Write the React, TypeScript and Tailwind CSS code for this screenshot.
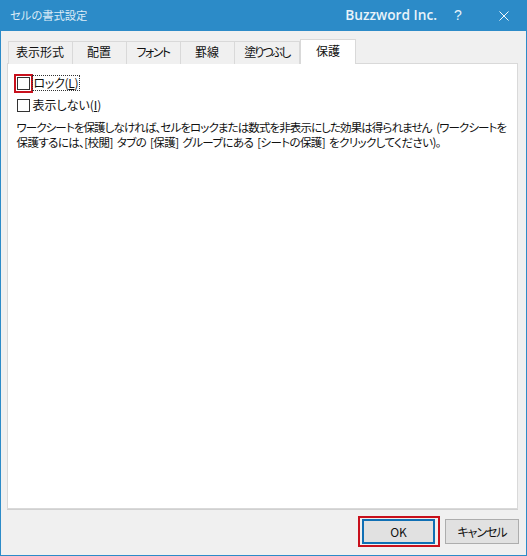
const font = { fontFamily: '"Noto Sans CJK JP", "Liberation Sans", sans-serif' };

const tabs = [
  { label: '表示形式', width: 'w-[65px]', tight: '' },
  { label: '配置', width: 'w-[54px]', tight: '' },
  { label: 'フォント', width: 'w-[54px]', tight: 'tracking-[-1.5px]' },
  { label: '罫線', width: 'w-[54px]', tight: '' },
  { label: '塗りつぶし', width: 'w-[65.5px]', tight: 'tracking-[-2px]' },
];

function Checkbox({ highlighted = false }: { highlighted?: boolean }) {
  return (
    <span
      className={`block h-[13px] w-[13px] shrink-0 border border-[#333] bg-white ${
        highlighted ? 'outline-2 outline-offset-1 outline-[#c8101c]' : ''
      }`}
    />
  );
}

export default function App() {
  return (
    <div
      className="flex h-[556px] w-[527px] flex-col overflow-hidden border border-t-0 border-[#2c8bc8] bg-[#f0f0f0] text-[12px] text-[#111] [font-feature-settings:'palt']"
      style={font}
    >
      <header className="flex h-[31px] shrink-0 items-center bg-[#2c8bc8] pl-[9px] text-white">
        <span className="text-[11.3px] text-[#dcecf7]">セルの書式設定</span>
        <span className="ml-auto text-[13.7px] font-semibold text-[#e8f3fa] [font-family:'Open_Sans',sans-serif]">
          Buzzword Inc.
        </span>
        <span className="ml-[16px] w-[10px] text-center text-[14px] text-[#e8f3fa] [font-family:'Liberation_Sans',sans-serif]">?</span>
        <svg className="ml-[36px] mr-[17px] h-[10px] w-[10px]" viewBox="0 0 10 10" fill="none" stroke="#f2f8fc" strokeWidth="1">
          <path d="M0.5 0.5 9.5 9.5M9.5 0.5 0.5 9.5" />
        </svg>
      </header>

      <div className="flex min-h-0 flex-1 flex-col pl-[5.5px] pr-[8px] pt-[8px]">
        <nav className="relative z-10 -mb-px flex h-[24.5px] items-end pl-px">
          {tabs.map((tab) => (
            <div
              key={tab.label}
              className={`flex h-[23px] items-center justify-center border border-b-0 border-l-0 border-[#d9d9d9] bg-[#f0f0f0] pb-[2px] first:border-l ${tab.width} ${tab.tight}`}
            >
              {tab.label}
            </div>
          ))}
          <div className="flex h-[25px] w-[56px] items-center justify-center border border-b-0 border-[#d9d9d9] bg-white pb-[2px]">
            保護
          </div>
        </nav>

        <main className="h-[447px] border border-[#d9d9d9] bg-white pl-[9px] pr-[8px] pt-[11px] shadow-[0_1px_0_#d0d0d0]">
          <label className="flex h-[17px] items-center gap-[2px]">
            <Checkbox highlighted />
            <span className="flex h-[16px] items-center border border-dotted border-[#333] px-[1px] leading-none tracking-[-0.3px]">
              ロック(<span className="underline">L</span>)
            </span>
          </label>
          <label className="mt-[5px] flex h-[17px] items-center gap-[3px]">
            <Checkbox />
            <span className="leading-none">
              表示しない(<span className="underline">I</span>)
            </span>
          </label>
          <p className="mt-[6px] text-[11.5px] leading-[15px] whitespace-nowrap">
            <span className="block tracking-[-0.9px] [word-spacing:3px]">
              ワークシートを保護しなければ、セルをロックまたは数式を非表示にした効果は得られません (ワークシートを
            </span>
            <span className="block tracking-[-0.6px] [word-spacing:2px]">
              保護するには、[校閲] タブの [保護] グループにある [シートの保護] をクリックしてください)。
            </span>
          </p>
        </main>

        <footer className="-mr-px flex h-[46px] items-start justify-end gap-[10px] pt-[10px]">
          <div className="-mx-[4.5px] -mt-[3px] border-2 border-[#c8101c] px-[2.5px] py-px">
            <button className="block h-[25px] w-[73px] border-2 border-[#0f6fb4] bg-[#e1e1e1]">OK</button>
          </div>
          <button className="h-[25px] w-[74px] border border-[#adadad] bg-[#e1e1e1] tracking-[-1px]">キャンセル</button>
        </footer>
      </div>
    </div>
  );
}
